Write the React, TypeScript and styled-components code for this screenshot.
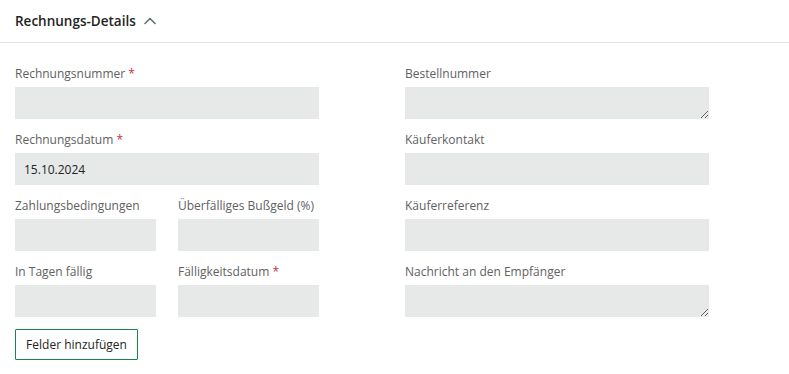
import React from 'react';
import styled, { createGlobalStyle } from 'styled-components';
import { ChevronUp } from 'lucide-react';

const GlobalStyle = createGlobalStyle`
  body {
    margin: 0;
    background: #ffffff;
    font-family: 'Open Sans', 'Noto Sans', sans-serif;
  }
`;

const Header = styled.div`
  height: 42px;
  display: flex;
  align-items: center;
  gap: 4px;
  padding: 0 15px;
  border-bottom: 1px solid #e3e3e3;
  color: #242424;
  font-size: 13.5px;
  font-weight: 600;
`;

const Form = styled.div`
  display: grid;
  grid-template-columns: 304px 304px;
  column-gap: 86px;
  padding: 22px 15px 0;
`;

const Column = styled.div`
  display: flex;
  flex-direction: column;
  gap: 12px;
`;

const Pair = styled.div`
  display: grid;
  grid-template-columns: 141px 141px;
  column-gap: 22px;
`;

const Field = styled.div`
  display: flex;
  flex-direction: column;
`;

const Label = styled.label`
  height: 17px;
  line-height: 17px;
  margin-bottom: 5px;
  font-size: 12px;
  color: #616161;
  white-space: nowrap;
`;

const Star = styled.span`
  color: #c4314b;
`;

const Input = styled.input`
  box-sizing: border-box;
  height: 32px;
  width: 100%;
  border: none;
  outline: none;
  background: #e6e9e8;
  padding: 0 9px;
  font-family: inherit;
  font-size: 12px;
  color: #242424;
`;

const Area = styled.textarea`
  box-sizing: border-box;
  display: block;
  height: 32px;
  width: 100%;
  border: none;
  outline: none;
  background: #e6e9e8;
  resize: vertical;
  padding: 6px 9px;
  font-family: inherit;
  font-size: 12px;
`;

const AddButton = styled.button`
  align-self: flex-start;
  box-sizing: border-box;
  width: 123px;
  height: 31px;
  border: 1px solid #1a8450;
  border-radius: 1px;
  background: #ffffff;
  color: #242424;
  font-family: inherit;
  font-size: 12px;
  padding: 0;
`;

function LabelText({ text, required }: { text: string; required?: boolean }) {
  return (
    <Label>
      {text}
      {required && <Star> *</Star>}
    </Label>
  );
}

export default function App() {
  return (
    <>
      <GlobalStyle />
      <Header>
        Rechnungs-Details
        <ChevronUp size={20} color="#5b6f69" strokeWidth={1.8} />
      </Header>
      <Form>
        <Column>
          <Field>
            <LabelText text="Rechnungsnummer" required />
            <Input />
          </Field>
          <Field>
            <LabelText text="Rechnungsdatum" required />
            <Input defaultValue="15.10.2024" />
          </Field>
          <Pair>
            <Field>
              <LabelText text="Zahlungsbedingungen" />
              <Input />
            </Field>
            <Field>
              <LabelText text="Überfälliges Bußgeld (%)" />
              <Input />
            </Field>
          </Pair>
          <Pair>
            <Field>
              <LabelText text="In Tagen fällig" />
              <Input />
            </Field>
            <Field>
              <LabelText text="Fälligkeitsdatum" required />
              <Input />
            </Field>
          </Pair>
          <AddButton>Felder hinzufügen</AddButton>
        </Column>
        <Column>
          <Field>
            <LabelText text="Bestellnummer" />
            <Area />
          </Field>
          <Field>
            <LabelText text="Käuferkontakt" />
            <Input />
          </Field>
          <Field>
            <LabelText text="Käuferreferenz" />
            <Input />
          </Field>
          <Field>
            <LabelText text="Nachricht an den Empfänger" />
            <Area />
          </Field>
        </Column>
      </Form>
    </>
  );
}
